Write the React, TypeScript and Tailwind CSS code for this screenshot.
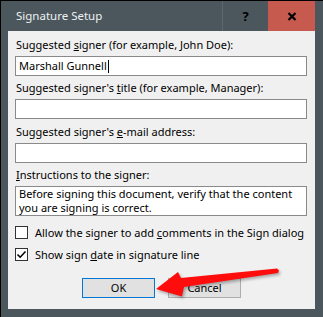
export default function App() {
  return (
    <div className="relative w-[323px] h-[317px] flex flex-col bg-[#4b575d] border-l border-t border-black pl-[7px] pr-[8px] pb-[8px] font-['Noto_Sans',sans-serif] text-[11px] text-black">
      {/* title bar */}
      <div className="flex h-[30px] shrink-0">
        <div className="flex-1 flex items-center pl-[8px] text-[11.5px] leading-[16px] text-[#eef0f1]">Signature Setup</div>
        <div className="w-[46px] flex items-center justify-center border-l border-[#5d686d] text-[13px] font-bold leading-none">?</div>
        <div className="w-[47px] flex items-center justify-center bg-[#c75a4e]">
          <svg width="10" height="9" viewBox="0 0 10 9">
            <path d="M1.5 1 L8.5 8 M8.5 1 L1.5 8" stroke="#000" strokeWidth="2.2" />
          </svg>
        </div>
      </div>

      {/* client area */}
      <div className="flex-1 flex flex-col bg-[#f0f0f0] pt-[6px] leading-[16px]">
        <Label>
          Suggested <u>s</u>igner (for example, John Doe):
        </Label>
        <div className="ml-[7px] mt-[3px] w-[292px] h-[20px] border border-[#8a8a8a] bg-white pl-[3px] leading-[18px] flex items-center whitespace-nowrap">
          Marshall Gunnell
          <span className="inline-block w-px h-[13px] bg-black ml-[1px]" />
        </div>

        <div className="mt-[4px]">
          <Label>
            Suggested signer's <u>t</u>itle (for example, Manager):
          </Label>
        </div>
        <Field />

        <div className="mt-[5px]">
          <Label>
            Suggested signer's <u>e</u>-mail address:
          </Label>
        </div>
        <Field />

        <div className="mt-[4px]">
          <Label>
            <u>I</u>nstructions to the signer:
          </Label>
        </div>
        <div className="ml-[7px] mt-[3px] w-[292px] h-[30px] border border-[#8a8a8a] bg-white pl-[3px] leading-[14px]">
          Before signing this document, verify that the content
          <br />
          you are signing is correct.
        </div>

        <div className="mt-[10px]">
          <Check label={<>Allow the signer to add <u>c</u>omments in the Sign dialog</>} />
        </div>
        <div className="mt-[9px]">
          <Check checked label={<>Show sign <u>d</u>ate in signature line</>} />
        </div>

        <div className="mt-[17px] flex justify-center gap-[13px]">
          <button className="w-[73px] h-[20px] border border-[#0078d7] bg-[#e1e1e1] leading-[18px]">OK</button>
          <button className="w-[73px] h-[20px] border border-[#adadad] bg-[#e1e1e1] leading-[18px]">Cancel</button>
        </div>
      </div>

      {/* red arrow annotation */}
      <svg className="absolute left-[-1px] top-[-1px] pointer-events-none" width="323" height="317" viewBox="0 0 323 317">
        <defs>
          <filter id="blur" x="-10%" y="-50%" width="120%" height="200%">
            <feGaussianBlur stdDeviation="1.6" />
          </filter>
        </defs>
        <polygon
          points="156,289 178,272 181,278 277,268.5 279,270.5 278,273 184,287 182,296.5"
          fill="#000"
          opacity="0.3"
          transform="translate(1.5,2)"
          filter="url(#blur)"
        />
        <polygon points="156,289 178,272 181,278 277,268.5 279,270.5 278,273 184,287 182,296.5" fill="#ff0d0d" />
      </svg>
    </div>
  )
}

function Label({ children }: { children: React.ReactNode }) {
  return <div className="pl-[8px] h-[16px] whitespace-nowrap">{children}</div>
}

function Field() {
  return <div className="ml-[7px] mt-[3px] w-[292px] h-[20px] border border-[#8a8a8a] bg-white" />
}

function Check({ label, checked }: { label: React.ReactNode; checked?: boolean }) {
  return (
    <div className="flex items-center h-[13px] pl-[7px] whitespace-nowrap">
      <div className="w-[13px] h-[13px] border border-[#333] bg-white shrink-0 flex items-center justify-center">
        {checked && (
          <svg width="11" height="11" viewBox="0 0 11 11">
            <path d="M1.5 5.5 L4.2 8.2 L9.5 2.5" stroke="#000" strokeWidth="1.6" fill="none" />
          </svg>
        )}
      </div>
      <span className="ml-[7px]">{label}</span>
    </div>
  )
}
